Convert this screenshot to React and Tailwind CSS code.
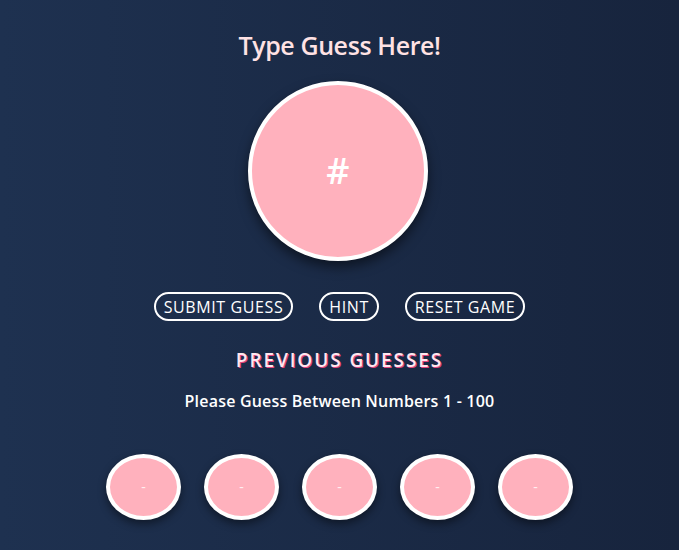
import React from 'react';

function GuessBubble() {
  return (
    <div className="w-[75px] h-[66px] rounded-[50%] bg-[#ffb1bd] border-4 border-white shadow-[0_4px_8px_rgba(0,0,0,0.45)] flex items-center justify-center text-white/80 text-sm">
      -
    </div>
  );
}

export default function App() {
  const buttons = ['Submit Guess', 'Hint', 'Reset Game'];

  return (
    <div
      className="min-h-screen h-[550px] w-full bg-gradient-to-r from-[#1e3150] to-[#17243d] flex flex-col items-center overflow-hidden"
      style={{ fontFamily: '"Open Sans", "Noto Sans", sans-serif' }}
    >
      <h1 className="mt-[28px] text-[25px] leading-[34px] text-[#ffe2e4] font-semibold tracking-[-0.4px]">Type Guess Here!</h1>

      <div className="mt-[19px] mr-[3px] w-[180px] h-[180px] rounded-full bg-[#ffb1bd] border-4 border-white shadow-[0_6px_12px_rgba(0,0,0,0.5)] flex items-center justify-center">
        <span className="text-white text-[36px] font-semibold">#</span>
      </div>

      <div className="mt-[31px] flex gap-[26px]">
        {buttons.map((b) => (
          <button
            key={b}
            className="h-[29px] px-[8px] rounded-full border-2 border-white text-white uppercase text-[16px] font-medium leading-none tracking-[0.6px]"
          >
            {b}
          </button>
        ))}
      </div>

      <h2 className="mt-[25px] text-[19px] font-semibold uppercase tracking-[1.9px] text-[#ffe6ee] [text-shadow:1px_1px_0_#e2457f]">
        Previous Guesses
      </h2>

      <p className="mt-[14px] text-[16px] text-white font-semibold tracking-[0.2px]">Please Guess Between Numbers 1 - 100</p>

      <div className="mt-[41px] flex gap-[23px]">
        {[0, 1, 2, 3, 4].map((i) => (
          <GuessBubble key={i} />
        ))}
      </div>
    </div>
  );
}
